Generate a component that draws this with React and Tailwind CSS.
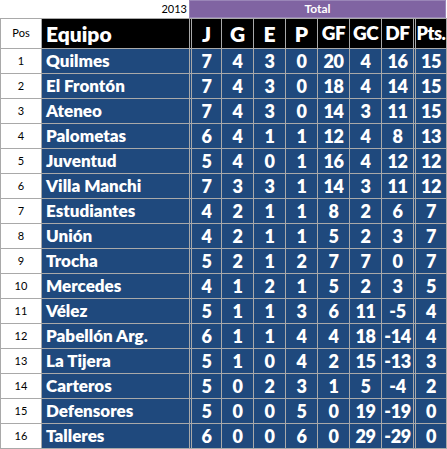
import React from "react";

const teams = [
  ["Quilmes", 7, 4, 3, 0, 20, 4, 16, 15],
  ["El Frontón", 7, 4, 3, 0, 18, 4, 14, 15],
  ["Ateneo", 7, 4, 3, 0, 14, 3, 11, 15],
  ["Palometas", 6, 4, 1, 1, 12, 4, 8, 13],
  ["Juventud", 5, 4, 0, 1, 16, 4, 12, 12],
  ["Villa Manchi", 7, 3, 3, 1, 14, 3, 11, 12],
  ["Estudiantes", 4, 2, 1, 1, 8, 2, 6, 7],
  ["Unión", 4, 2, 1, 1, 5, 2, 3, 7],
  ["Trocha", 5, 2, 1, 2, 7, 7, 0, 7],
  ["Mercedes", 4, 1, 2, 1, 5, 2, 3, 5],
  ["Vélez", 5, 1, 1, 3, 6, 11, -5, 4],
  ["Pabellón Arg.", 6, 1, 1, 4, 4, 18, -14, 4],
  ["La Tijera", 5, 1, 0, 4, 2, 15, -13, 3],
  ["Carteros", 5, 0, 2, 3, 1, 5, -4, 2],
  ["Defensores", 5, 0, 0, 5, 0, 19, -19, 0],
  ["Talleres", 6, 0, 0, 6, 0, 29, -29, 0],
];

const font = { fontFamily: "Lato, 'Liberation Sans', sans-serif" };

// widths of the stat columns, J..DF then Pts
const statCls = [
  "w-[30px] border-r border-[#a9a9a9]",
  "w-[32px] border-r border-[#a9a9a9]",
  "w-[32px] border-r border-[#a9a9a9]",
  "w-[32px] border-r border-[#a9a9a9]",
  "w-[32px] border-r border-[#a9a9a9]",
  "w-[32px] border-r border-[#a9a9a9]",
  "w-[34px] border-r-[3px] border-double border-[#a9a9a9]",
  "w-[31px] border-r border-[#a9a9a9]",
];

function Row({ pos, name, stats, header }) {
  const bg = header ? "bg-black" : "bg-[#1f497d]";
  return (
    <div
      className={`flex border-l border-b border-[#a9a9a9] ${
        header ? "h-[30px]" : "h-[25px]"
      }`}
    >
      <div className="w-[41px] shrink-0 border-r border-[#a9a9a9] bg-white flex items-center justify-center text-[11px] text-black">
        {pos}
      </div>
      <div
        className={`w-[150px] shrink-0 border-r-[3px] border-double border-[#a9a9a9] ${bg} flex items-center pl-[4px] text-white font-extrabold ${
          header ? "text-[21px]" : "text-[17px]"
        }`}
      >
        {name}
      </div>
      {stats.map((s, i) => (
        <div
          key={i}
          className={`${statCls[i]} shrink-0 ${bg} flex items-center justify-center text-white font-extrabold ${
            header
              ? i === 7
                ? "text-[18px] tracking-tight"
                : i >= 4
                ? "text-[19px] tracking-tight"
                : "text-[21px]"
              : "text-[18px] tracking-tight"
          }`}
        >
          {s}
        </div>
      ))}
    </div>
  );
}

export default function App() {
  return (
    <div className="w-[447px] h-[449px] bg-white overflow-hidden" style={font}>
      <div className="flex h-[19px] border-b border-[#a9a9a9]">
        <div className="w-[189px] shrink-0 flex items-center justify-end pr-[2px] text-[11px] text-black">
          2013
        </div>
        <div className="w-[257px] shrink-0 bg-[#8064a2] border border-[#9a86b8] flex items-center justify-center text-[12px] font-bold text-white">
          Total
        </div>
      </div>
      <Row
        header
        pos="Pos"
        name="Equipo"
        stats={["J", "G", "E", "P", "GF", "GC", "DF", "Pts."]}
      />
      {teams.map((t, i) => (
        <Row key={t[0]} pos={i + 1} name={t[0]} stats={t.slice(1)} />
      ))}
    </div>
  );
}
